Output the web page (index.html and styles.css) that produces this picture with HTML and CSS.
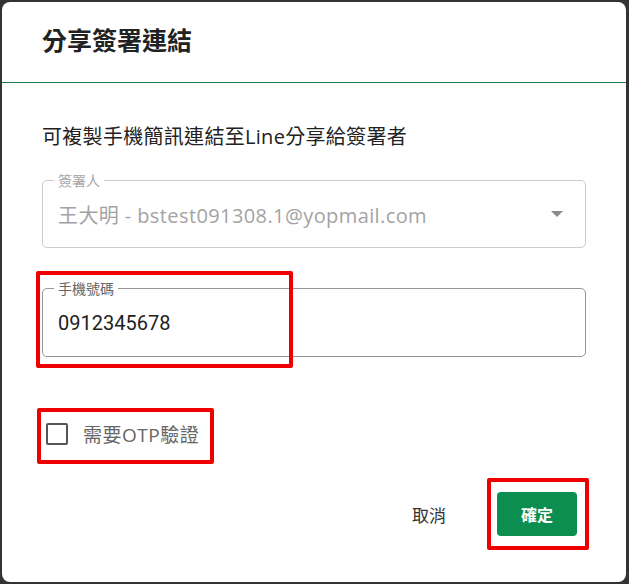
FILE: index.html
```html
<!DOCTYPE html>
<html lang="zh-Hant">
<head>
<meta charset="utf-8">
<title>分享簽署連結</title>
<link rel="stylesheet" href="styles.css">
</head>
<body>
<div class="dialog">
  <div class="dialog-header">
    <h2 class="dialog-title">分享簽署連結</h2>
  </div>
  <div class="dialog-body">
    <p class="hint">可複製手機簡訊連結至Line分享給簽署者</p>

    <div class="field field-select">
      <span class="field-label">簽署人</span>
      <span class="field-value">王大明 - bstest091308.1@yopmail.com</span>
      <span class="caret"></span>
    </div>

    <div class="field field-phone">
      <span class="field-label">手機號碼</span>
      <span class="field-value">0912345678</span>
      <span class="mark mark-phone"></span>
    </div>

    <label class="check-row">
      <span class="checkbox"></span>
      <span class="check-label">需要OTP驗證</span>
      <span class="mark mark-check"></span>
    </label>

    <div class="actions">
      <button class="btn btn-text">取消</button>
      <button class="btn btn-primary">確定<span class="mark mark-btn"></span></button>
    </div>
  </div>
</div>
</body>
</html>
```

FILE: styles.css
```css
html, body {
  margin: 0;
  padding: 0;
}
body {
  background: #333333;
  width: 629px;
  height: 584px;
  overflow: hidden;
  font-family: "Noto Sans CJK TC", sans-serif;
}
.dialog {
  margin: 2px 0 0 2px;
  width: 624px;
  height: 580px;
  background: #ffffff;
  border-radius: 8px;
  display: flex;
  flex-direction: column;
}
.dialog-header {
  height: 80px;
  border-bottom: 1px solid #1e7d4c;
  display: flex;
  align-items: center;
  padding: 0 40px;
}
.dialog-title {
  margin: 0;
  font-family: Roboto, "Noto Sans CJK TC", sans-serif;
  font-size: 25px;
  font-weight: 700;
  color: #222222;
  line-height: 30px;
}
.dialog-body {
  padding: 0 40px;
  display: flex;
  flex-direction: column;
}
.hint {
  margin: 40px 0 0;
  font-family: "Open Sans", "Noto Sans CJK TC", sans-serif;
  font-size: 20px;
  line-height: 28px;
  letter-spacing: 0.3px;
  color: #222222;
}
.field {
  position: relative;
  box-sizing: border-box;
  border-radius: 5px;
  display: flex;
  align-items: center;
  padding: 0 15px;
}
.field-label {
  position: absolute;
  left: 11px;
  top: -10px;
  padding: 0 4px;
  background: #ffffff;
  font-size: 14px;
  line-height: 18px;
}
.field-select {
  margin-top: 29px;
  height: 68px;
  border: 1px solid #cccccc;
}
.field-select .field-label {
  color: #a8a8a8;
}
.field-select .field-value {
  flex: 1;
  font-family: "Open Sans", "Noto Sans CJK TC", sans-serif;
  font-size: 20px;
  letter-spacing: 0.4px;
  color: #a3a3a3;
}
.caret {
  width: 0;
  height: 0;
  border-left: 6px solid transparent;
  border-right: 6px solid transparent;
  border-top: 6px solid #8a8a8a;
  margin-right: 7px;
}
.field-phone {
  margin-top: 40px;
  height: 69px;
  border: 1px solid #969696;
}
.field-phone .field-label {
  color: #666666;
}
.field-phone .field-value {
  font-family: Roboto, sans-serif;
  font-size: 20px;
  color: #222222;
}
.mark {
  position: absolute;
  box-sizing: border-box;
  border: 4px solid #ee0000;
  border-radius: 2px;
  pointer-events: none;
}
.mark-phone {
  left: -7px;
  top: -18px;
  width: 257px;
  height: 97px;
}
.check-row {
  position: relative;
  margin-top: 66px;
  height: 22px;
  display: flex;
  align-items: center;
}
.checkbox {
  box-sizing: border-box;
  width: 22px;
  height: 22px;
  margin-left: 4px;
  border: 2.5px solid #555555;
  border-radius: 2px;
}
.check-label {
  margin-left: 15px;
  font-family: "Open Sans", "Noto Sans CJK TC", sans-serif;
  font-size: 19px;
  letter-spacing: 0.5px;
  color: #666666;
}
.mark-check {
  left: -5px;
  top: -15px;
  width: 177px;
  height: 56px;
}
.actions {
  margin-top: 47px;
  display: flex;
  justify-content: flex-end;
  align-items: center;
  gap: 35px;
  padding-right: 9px;
}
.btn {
  font-family: Roboto, "Noto Sans CJK TC", sans-serif;
  border: none;
  cursor: pointer;
}
.btn-text {
  background: transparent;
  font-size: 17px;
  color: #333333;
  padding: 8px 16px;
}
.btn-primary {
  position: relative;
  width: 80px;
  height: 44px;
  background: #0b8e4f;
  color: #ffffff;
  font-size: 16px;
  font-weight: 700;
  border-radius: 4px;
}
.mark-btn {
  left: -10px;
  top: -14px;
  width: 102px;
  height: 72px;
}
```
